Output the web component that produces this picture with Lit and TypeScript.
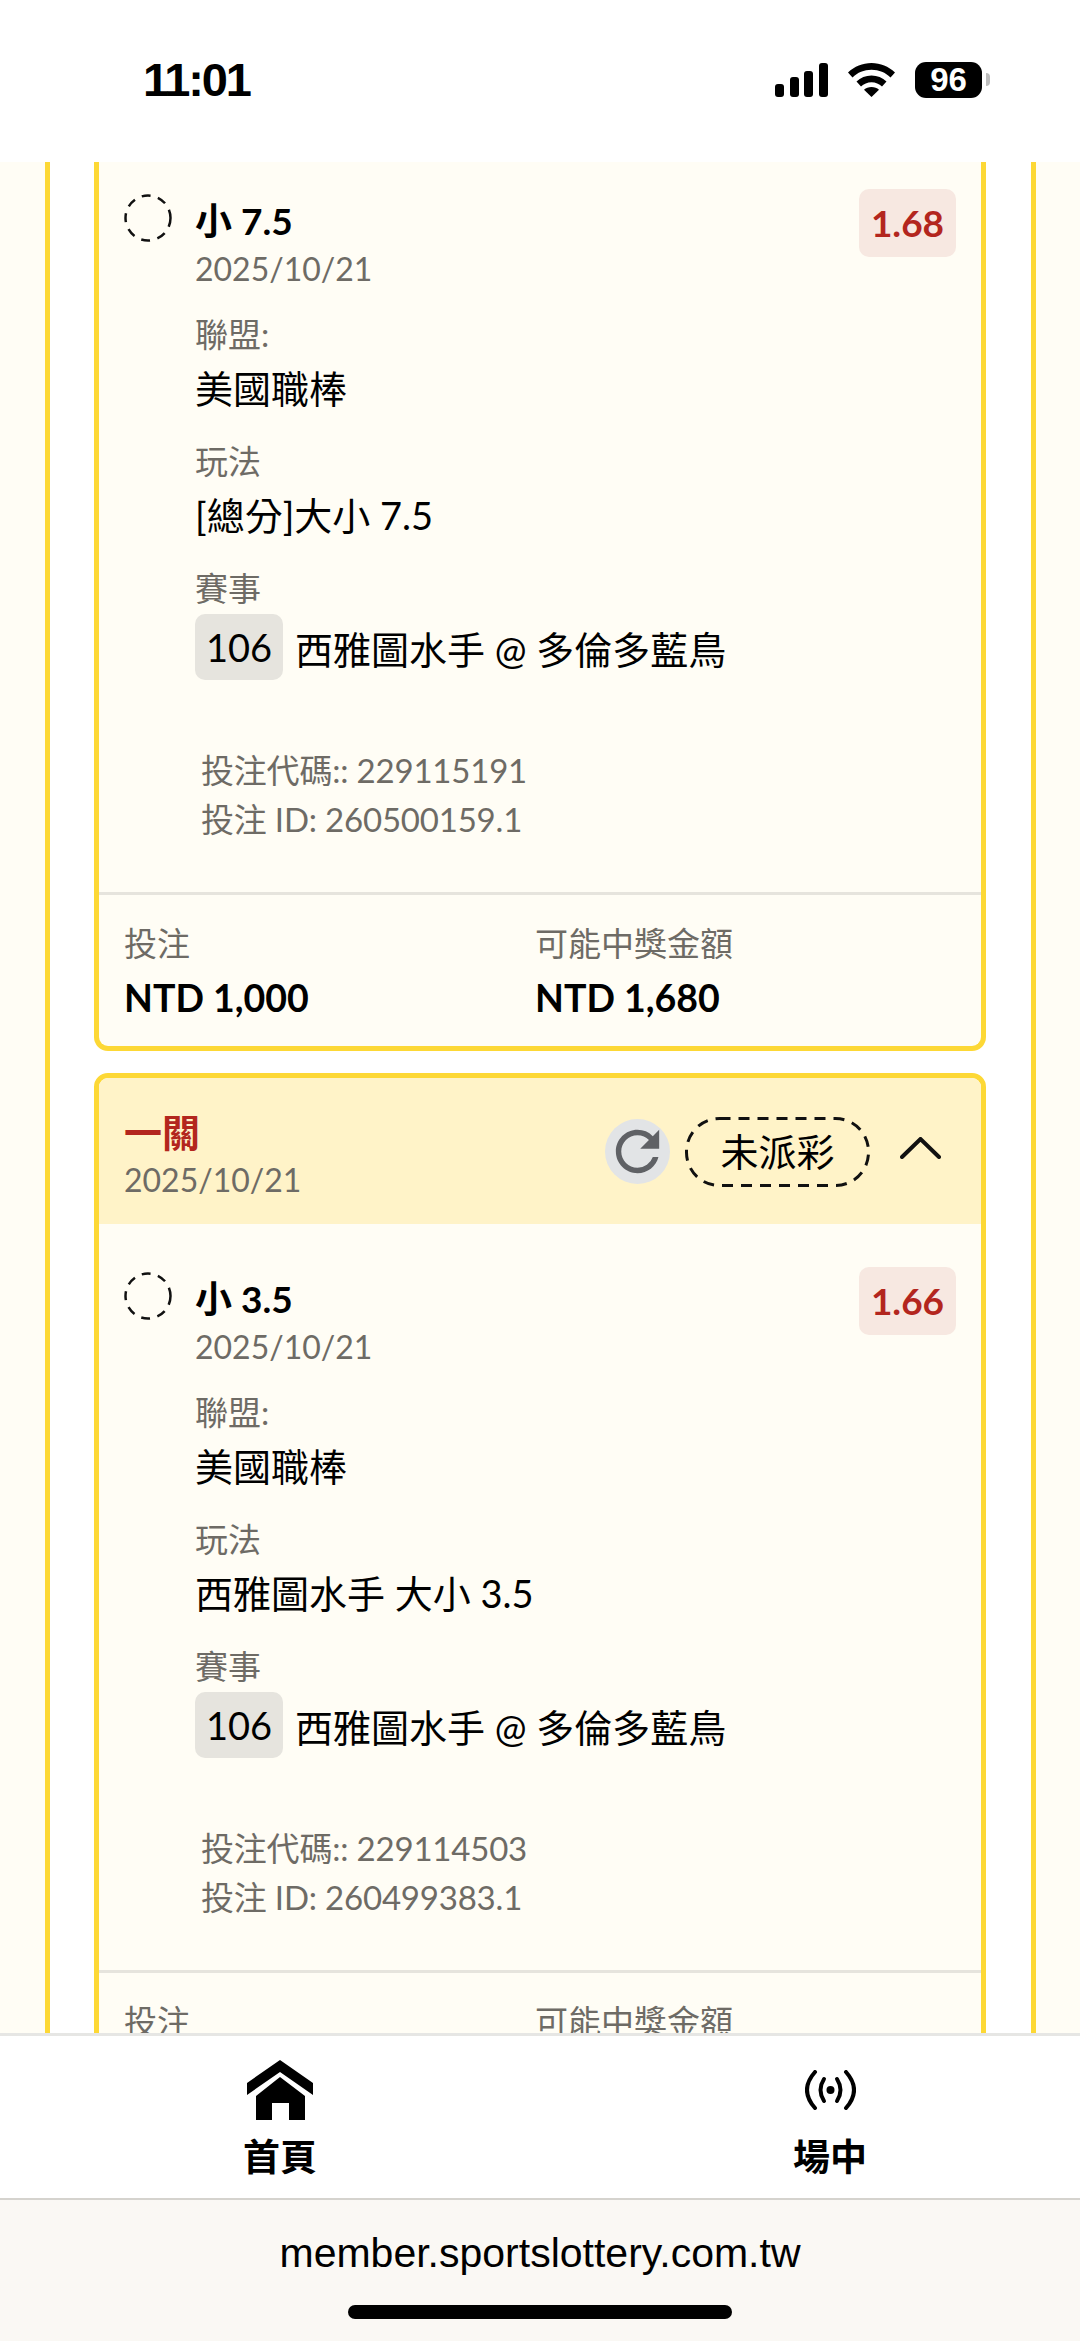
import { LitElement, html, css, svg } from 'lit'
import { customElement } from 'lit/decorators.js'

const bets = [
  {
    cut: true,
    pick: '小 7.5',
    odds: '1.68',
    play: '[總分]大小 7.5',
    code: '229115191',
    id: '260500159.1',
    stake: 'NTD 1,000',
    win: 'NTD 1,680'
  },
  {
    cut: false,
    pick: '小 3.5',
    odds: '1.66',
    play: '西雅圖水手 大小 3.5',
    code: '229114503',
    id: '260499383.1',
    stake: '',
    win: ''
  }
]

const refreshPath = 'M17.65 6.35A7.958 7.958 0 0 0 12 4c-4.42 0-7.99 3.58-7.99 8s3.57 8 7.99 8c3.73 0 6.84-2.55 7.73-6h-2.08A5.99 5.99 0 0 1 12 18c-3.31 0-6-2.69-6-6s2.69-6 6-6c1.66 0 3.14.69 4.22 1.78L13 11h7V4l-2.35 2.35z'

@customElement('app-root')
export class AppRoot extends LitElement {
  static styles = [
    css`
      * {box-sizing: border-box}

      :host {
        display: flex;
        flex-direction: column;
        width: 1080px;
        height: 2341px;
        overflow: hidden;
        background: #fff;
        color: #000;
        font-family: Lato, "Noto Sans CJK TC", sans-serif;
      }

      .status {
        flex: none;
        height: 162px;
        display: flex;
        justify-content: space-between;
        align-items: flex-start;
        padding: 54px 98px 0 143px;
      }

      .time {
        font-family: "Liberation Sans", sans-serif;
        font-size: 47px;
        font-weight: 700;
        line-height: 52px;
        letter-spacing: -2.2px;
      }

      .status-icons {
        display: flex;
        align-items: center;
        gap: 20px;
        padding-top: 8px;
      }

      .battery {
        width: 67px;
        height: 36px;
        border-radius: 11px;
        background: #000;
        color: #fff;
        font-family: "Liberation Sans", sans-serif;
        font-size: 33px;
        font-weight: 700;
        line-height: 36px;
        text-align: center;
        position: relative;
      }

      .battery::after {
        content: '';
        position: absolute;
        left: 71px;
        top: 11px;
        width: 4px;
        height: 13px;
        border-radius: 0 4px 4px 0;
        background: #bdbdbd;
      }

      .scroll {
        flex: 1;
        min-height: 0;
        overflow: hidden;
        background: #fffdf5;
      }

      .outer {
        margin: 0 44px 0 45px;
        padding: 0 45px 0 44px;
        border: solid #fdd835;
        border-width: 0 5px;
        background: #fff;
        display: flex;
        flex-direction: column;
        gap: 22px;
        min-height: 100%;
      }

      .card {
        flex: none;
        border: 5px solid #fdd835;
        border-radius: 14px;
        background: #fffdf5;
        overflow: hidden;
      }

      .card.cut {
        margin-top: -17px;
        border-top: none;
        border-radius: 0 0 14px 14px;
      }

      .head {
        height: 146px;
        padding: 0 25px;
        background: #fff3c8;
        display: flex;
        justify-content: space-between;
        align-items: center;
      }

      .head-title {
        padding-top: 10px;
      }

      .head-name {
        color: #b3261e;
        font-size: 38px;
        font-weight: 700;
        line-height: 48px;
      }

      .muted {
        color: #6e6b65;
        font-size: 32px;
        line-height: 48px;
      }

      .head-actions {
        display: flex;
        align-items: center;
      }

      .refresh {
        width: 65px;
        height: 65px;
        border-radius: 50%;
        background: #e2e4e6;
        display: flex;
        align-items: center;
        justify-content: center;
      }

      .pill {
        position: relative;
        width: 185px;
        height: 70px;
        margin: 2px 30px 0 15px;
        font-size: 38px;
        line-height: 68px;
        text-align: center;
      }

      .pill svg {
        position: absolute;
        inset: 0;
      }

      .chevron {
        display: block;
        margin: -6px 15px 0 0;
      }

      .body {
        padding: 48px 25px 48px;
      }

      .card.cut .body {
        padding-top: 49px;
      }

      .pick {
        display: flex;
        align-items: flex-start;
        gap: 23px;
      }

      .pick-main {
        flex: 1;
        padding-top: 3px;
      }

      .pick-name {
        font-size: 37px;
        font-weight: 700;
        line-height: 48px;
      }

      .odds {
        width: 97px;
        height: 68px;
        margin-top: -5px;
        border-radius: 10px;
        background: #f7e8e1;
        color: #b3261e;
        font-size: 37px;
        font-weight: 700;
        line-height: 68px;
        text-align: center;
      }

      .details {
        padding-left: 71px;
      }

      .row {
        margin-top: 19px;
      }

      .label {
        color: #6e6b65;
        font-size: 33px;
        line-height: 44px;
      }

      .value {
        font-size: 38px;
        line-height: 64px;
      }

      .match {
        display: flex;
        align-items: center;
        gap: 12px;
        margin-top: 4px;
        font-size: 38px;
      }

      .chip {
        width: 88px;
        height: 66px;
        border-radius: 10px;
        background: #e6e4de;
        line-height: 66px;
        text-align: center;
      }

      .codes {
        margin-top: 66px;
        padding-left: 6px;
        color: #6e6b65;
        font-size: 33px;
        line-height: 49px;
        letter-spacing: -0.2px;
      }

      .foot {
        border-top: 3px solid #e6e4dd;
        padding: 24px 25px 17px;
        display: grid;
        grid-template-columns: 411px 1fr;
      }

      .foot-label {
        color: #6e6b65;
        font-size: 33px;
        line-height: 48px;
      }

      .foot-value {
        font-size: 37.5px;
        font-weight: 700;
        line-height: 62px;
      }

      .nav {
        flex: none;
        height: 165px;
        border-top: 3px solid #e6e6e4;
        background: #fff;
        padding: 24px 213px 0 243px;
        display: flex;
        justify-content: space-between;
      }

      .nav-item {
        display: flex;
        flex-direction: column;
        align-items: center;
        font-size: 37px;
        font-weight: 700;
        line-height: 50px;
      }

      .nav-icon {
        height: 60px;
        margin-bottom: 12px;
        display: flex;
        align-items: center;
      }

      .browser {
        flex: none;
        height: 143px;
        border-top: 2px solid #d5d3ce;
        background: #faf8f4;
        display: flex;
        flex-direction: column;
        align-items: center;
        padding-top: 30px;
      }

      .url {
        font-family: "Liberation Sans", sans-serif;
        font-size: 41px;
        line-height: 46px;
      }

      .home-bar {
        width: 384px;
        height: 14px;
        margin-top: 29px;
        border-radius: 7px;
        background: #000;
      }
    `
  ]

  renderBet (bet: typeof bets[number]) {
    return html`
      <section class="card ${bet.cut ? 'cut' : ''}">
        ${bet.cut ? '' : html`
          <header class="head">
            <div class="head-title">
              <div class="head-name">一關</div>
              <div class="muted">2025/10/21</div>
            </div>
            <div class="head-actions">
              <div class="refresh">
                <svg width="67" height="67" viewBox="0 0 24 24"><path fill="#5f6165" d="${refreshPath}"/></svg>
              </div>
              <div class="pill">
                <svg width="185" height="70" viewBox="0 0 185 70"><rect x="1.5" y="1.5" width="182" height="67" rx="33" fill="none" stroke="#111" stroke-width="3" stroke-dasharray="11 8"/></svg>
                未派彩
              </div>
              <svg class="chevron" width="41" height="22" viewBox="0 0 41 22"><path d="M2 20 20.5 2 39 20" fill="none" stroke="#111" stroke-width="4" stroke-linecap="round" stroke-linejoin="miter"/></svg>
            </div>
          </header>
        `}
        <div class="body">
          <div class="pick">
            <svg width="48" height="48" viewBox="0 0 48 48"><circle cx="24" cy="24" r="22.5" fill="none" stroke="#111" stroke-width="2.5" stroke-dasharray="9 7.5"/></svg>
            <div class="pick-main">
              <div class="pick-name">${bet.pick}</div>
              <div class="muted">2025/10/21</div>
            </div>
            <div class="odds">${bet.odds}</div>
          </div>
          <div class="details">
            <div class="row">
              <div class="label">聯盟:</div>
              <div class="value">美國職棒</div>
            </div>
            <div class="row">
              <div class="label">玩法</div>
              <div class="value">${bet.play}</div>
            </div>
            <div class="row">
              <div class="label">賽事</div>
              <div class="match">
                <span class="chip">106</span>
                <span>西雅圖水手 @ 多倫多藍鳥</span>
              </div>
            </div>
            <div class="codes">
              <div>投注代碼:: ${bet.code}</div>
              <div>投注 ID: ${bet.id}</div>
            </div>
          </div>
        </div>
        <div class="foot">
          <div>
            <div class="foot-label">投注</div>
            ${bet.stake ? html`<div class="foot-value">${bet.stake}</div>` : ''}
          </div>
          <div>
            <div class="foot-label">可能中獎金額</div>
            ${bet.win ? html`<div class="foot-value">${bet.win}</div>` : ''}
          </div>
        </div>
      </section>
    `
  }

  render () {
    return html`
      <div class="status">
        <div class="time">11:01</div>
        <div class="status-icons">
          <svg width="53" height="34" viewBox="0 0 53 34">
            <rect x="0" y="21" width="9" height="13" rx="3"/>
            <rect x="15" y="14" width="9" height="20" rx="3"/>
            <rect x="29" y="8" width="9" height="26" rx="3"/>
            <rect x="44" y="0" width="9" height="34" rx="3"/>
          </svg>
          <svg width="47" height="34" viewBox="0 0 47 34">
            ${svg`<path d="M23.5 0C14.5 0 6.5 3.5 0 9.5l4.5 5C9.5 9.6 16 6.8 23.5 6.8S37.5 9.6 42.5 14.5l4.5-5C40.5 3.5 32.5 0 23.5 0Z"/>
            <path d="M23.5 12.5c-5.8 0-11 2.2-15 6l4.5 5c2.8-2.6 6.4-4.2 10.5-4.2s7.7 1.6 10.5 4.2l4.5-5c-4-3.8-9.2-6-15-6Z"/>
            <path d="M23.5 24c-3 0-5.5 1-7.5 2.8L23.5 34 31 26.8C29 25 26.5 24 23.5 24Z"/>`}
          </svg>
          <div class="battery">96</div>
        </div>
      </div>

      <main class="scroll">
        <div class="outer">
          ${bets.map(bet => this.renderBet(bet))}
        </div>
      </main>

      <nav class="nav">
        <div class="nav-item">
          <div class="nav-icon">
            <svg width="66" height="60" viewBox="0 0 66 60">
              <polygon points="33,0 66,23 66,35 33,12 0,35 0,23"/>
              <polygon points="33,17 58,36 58,60 42,60 42,43 25,43 25,60 9,60 9,36"/>
            </svg>
          </div>
          首頁
        </div>
        <div class="nav-item">
          <div class="nav-icon">
            <svg width="51" height="40" viewBox="0 0 51 40">
              <circle cx="25.5" cy="20" r="4"/>
              <g fill="none" stroke="#000" stroke-width="4" stroke-linecap="round">
                <path d="M19 9Q12 20 19 31"/>
                <path d="M32 9Q39 20 32 31"/>
                <path d="M10 2Q-6 20 10 38"/>
                <path d="M41 2Q57 20 41 38"/>
              </g>
            </svg>
          </div>
          場中
        </div>
      </nav>

      <footer class="browser">
        <div class="url">member.sportslottery.com.tw</div>
        <div class="home-bar"></div>
      </footer>
    `
  }
}
